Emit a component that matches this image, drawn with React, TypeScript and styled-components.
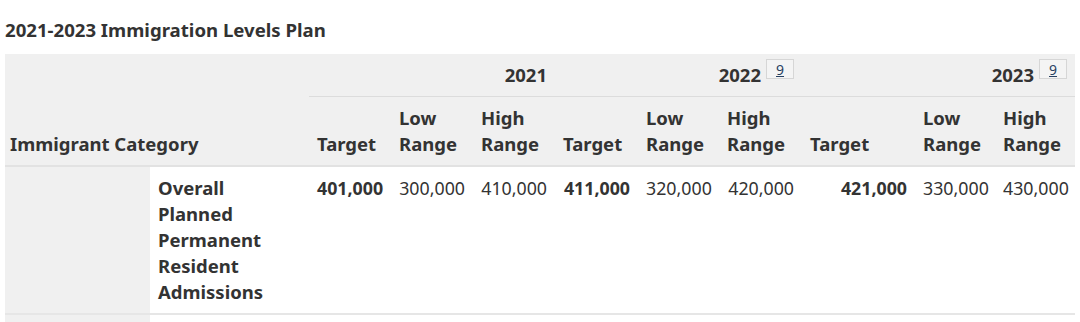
import styled, { createGlobalStyle } from 'styled-components'

const GlobalStyle = createGlobalStyle`
  body {
    margin: 0;
    background: #fff;
    font-family: "Noto Sans", "Open Sans", sans-serif;
    color: #333;
  }
`

const Page = styled.div`
  padding: 18px 5px 0;
`

const Title = styled.h2`
  margin: 0 0 12px;
  font-size: 18.6px;
  line-height: 24px;
  font-weight: 700;
  color: #333;
`

const Table = styled.table`
  width: 1070px;
  border-collapse: collapse;
  table-layout: fixed;
  font-size: 18.5px;
  line-height: 26px;
`

const HeadCell = styled.th<{ $align?: 'left' | 'right'; $rule?: boolean; $inset?: number }>`
  background: #f0f0f0;
  font-weight: 700;
  text-align: ${p => p.$align || 'left'};
  vertical-align: bottom;
  padding: 8px;
  padding-left: ${p => p.$inset ?? 8}px;
  border-bottom: ${p => (p.$rule ? '1px solid #dcdcdc' : 'none')};
  white-space: nowrap;
`

const SubHeadCell = styled(HeadCell)`
  white-space: normal;
`

const SubHeadRow = styled.tr`
  border-bottom: 2px solid #e2e2e2;
`

const BodyRow = styled.tr`
  border-bottom: 2px solid #e6e6e6;
`

const GroupCell = styled.td`
  background: #f0f0f0;
  padding: 8px;
  vertical-align: top;
`

const NameCell = styled.th`
  text-align: left;
  vertical-align: top;
  font-weight: 700;
  padding: 8px;
`

const ValueCell = styled.td<{ $strong?: boolean }>`
  text-align: right;
  vertical-align: top;
  padding: 8px;
  font-size: 17.8px;
  font-weight: ${p => (p.$strong ? 700 : 400)};
  white-space: nowrap;
`

/* footnote badge sits raised beside the year, without growing the row */
const Note = styled.a`
  position: relative;
  top: -7px;
  display: inline-block;
  margin-left: 5px;
  padding: 0 9px;
  height: 20px;
  line-height: 19px;
  font-size: 14px;
  font-weight: 400;
  vertical-align: baseline;
  color: #284162;
  text-decoration: underline;
  background: #f4f4f4;
  border: 1px solid #d6d6d6;
  box-sizing: border-box;
`

const widths = [145, 159, 82, 82, 82, 83, 81, 83, 113, 80, 80]

const years = [
  { year: '2021', note: false },
  { year: '2022', note: true },
  { year: '2023', note: true },
]

const rows = [
  {
    group: '',
    name: 'Overall Planned Permanent Resident Admissions',
    values: ['401,000', '300,000', '410,000', '411,000', '320,000', '420,000', '421,000', '330,000', '430,000'],
  },
  { group: '', name: '', values: [] as string[] },
]

const App = () => {
  return (
    <Page>
      <GlobalStyle />
      <Title>2021-2023 Immigration Levels Plan</Title>
      <Table>
        <colgroup>
          {widths.map((w, i) => (
            <col key={i} style={{ width: w }} />
          ))}
        </colgroup>
        <thead>
          <tr>
            <HeadCell colSpan={2} rowSpan={2} $inset={5}>Immigrant Category</HeadCell>
            {years.map(y => (
              <HeadCell key={y.year} colSpan={3} $align="right" $rule>
                {y.year}
                {y.note && <Note href="#fn9">9</Note>}
              </HeadCell>
            ))}
          </tr>
          <SubHeadRow>
            {years.map(y => [
              <SubHeadCell key={y.year + 't'}>Target</SubHeadCell>,
              <SubHeadCell key={y.year + 'l'}>Low Range</SubHeadCell>,
              <SubHeadCell key={y.year + 'h'}>High Range</SubHeadCell>,
            ])}
          </SubHeadRow>
        </thead>
        <tbody>
          {rows.map((r, ri) => (
            <BodyRow key={ri}>
              <GroupCell>{r.group}</GroupCell>
              <NameCell>{r.name}</NameCell>
              {r.values.length > 0
                ? r.values.map((v, i) => (
                    <ValueCell key={i} $strong={i % 3 === 0}>{v}</ValueCell>
                  ))
                : <ValueCell colSpan={9}>&nbsp;</ValueCell>}
            </BodyRow>
          ))}
        </tbody>
      </Table>
    </Page>
  )
}

export default App
